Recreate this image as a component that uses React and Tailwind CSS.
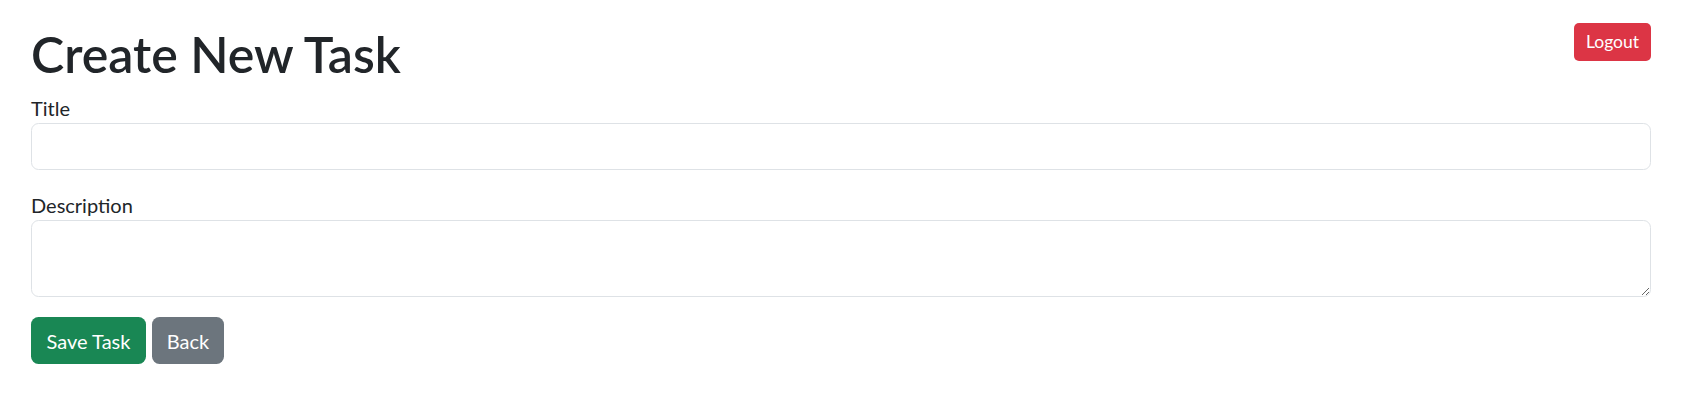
import { useState } from "react";

function CreateTaskPage() {
  const [title, setTitle] = useState("");
  const [description, setDescription] = useState("");

  return (
    <div className="ml-[31px] w-[1620px] pt-[23px] font-['Lato',sans-serif] text-[#212529]">
      <div className="flex items-start justify-between">
        <h1 className="mb-[8px] pt-[1px] text-[50px] font-semibold leading-[61px]">Create New Task</h1>
        <button
          className="h-[38px] w-[77px] rounded-[5px] bg-[#dc3545] text-[17.5px] text-white"
          type="button"
        >
          Logout
        </button>
      </div>

      <form onSubmit={(event) => event.preventDefault()}>
        <label className="block text-[20px] leading-[30px]" htmlFor="title">
          Title
        </label>
        <input
          className="block h-[47px] w-full rounded-[7.5px] border border-[#dee2e6] bg-white px-[15px] text-[20px] outline-none"
          id="title"
          onChange={(event) => setTitle(event.target.value)}
          type="text"
          value={title}
        />

        <label className="mt-[20px] block text-[20px] leading-[30px]" htmlFor="description">
          Description
        </label>
        <textarea
          className="block h-[77px] w-full resize-y rounded-[7.5px] border border-[#dee2e6] bg-white px-[15px] py-[8px] text-[20px] outline-none"
          id="description"
          onChange={(event) => setDescription(event.target.value)}
          value={description}
        />

        <div className="mt-[20px] flex gap-[6px]">
          <button
            className="h-[47px] w-[115px] rounded-[7.5px] bg-[#198754] text-[20px] text-white"
            type="submit"
          >
            Save Task
          </button>
          <button
            className="h-[47px] w-[72px] rounded-[7.5px] bg-[#6c757d] text-[20px] text-white"
            type="button"
          >
            Back
          </button>
        </div>
      </form>
    </div>
  );
}

export default function App() {
  return <CreateTaskPage />;
}
